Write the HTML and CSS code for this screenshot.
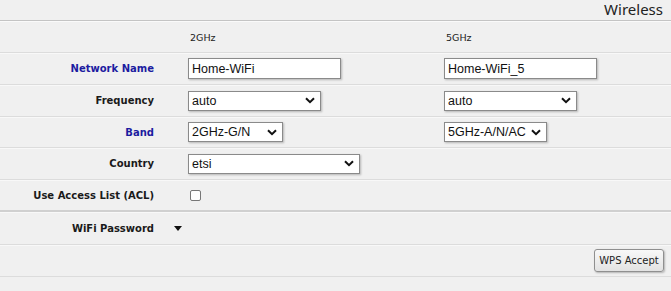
FILE: index.html
```html
<!DOCTYPE html>
<html>
<head>
<meta charset="utf-8">
<link rel="stylesheet" href="styles.css">
</head>
<body>
<div class="page">
  <div class="title">Wireless</div>
  <div class="row">
    <div class="lbl"></div>
    <div class="cell band-head">2GHz</div>
    <div class="cell band-head">5GHz</div>
  </div>
  <div class="row">
    <div class="lbl blue">Network Name</div>
    <div class="cell"><input class="txt" type="text" value="Home-WiFi"></div>
    <div class="cell"><input class="txt" type="text" value="Home-WiFi_5"></div>
  </div>
  <div class="row">
    <div class="lbl">Frequency</div>
    <div class="cell"><select class="sel w-freq"><option>auto</option></select></div>
    <div class="cell"><select class="sel w-freq"><option>auto</option></select></div>
  </div>
  <div class="row short">
    <div class="lbl blue">Band</div>
    <div class="cell"><select class="sel w-band2"><option>2GHz-G/N</option></select></div>
    <div class="cell"><select class="sel w-band5"><option>5GHz-A/N/AC</option></select></div>
  </div>
  <div class="row">
    <div class="lbl">Country</div>
    <div class="cell"><select class="sel w-country"><option>etsi</option></select></div>
    <div class="cell"></div>
  </div>
  <div class="row short sep">
    <div class="lbl">Use Access List (ACL)</div>
    <div class="cell"><input class="chk" type="checkbox"></div>
    <div class="cell"></div>
  </div>
  <div class="row tall">
    <div class="lbl toggle">WiFi Password<span class="tri"></span></div>
    <div class="cell"></div>
    <div class="cell"></div>
  </div>
  <div class="row actions">
    <button class="btn" type="button">WPS Accept</button>
  </div>
</div>
</body>
</html>
```

FILE: styles.css
```css
html, body {
  margin: 0;
  padding: 0;
  background: #f0f0f0;
}
.page {
  width: 671px;
  font-family: "DejaVu Sans", Verdana, sans-serif;
  color: #222;
}
.title {
  height: 20px;
  line-height: 19px;
  text-align: right;
  padding-right: 8px;
  font-family: "Noto Sans", "Open Sans", sans-serif;
  font-size: 15px;
  color: #222;
  border-bottom: 1px solid #c4c4c4;
  box-shadow: 0 1px 0 #fafafa;
}
.row {
  display: grid;
  grid-template-columns: 188px 256px 1fr;
  align-items: center;
  height: 31px;
  border-bottom: 1px solid #dcdcdc;
  box-shadow: 0 1px 0 #f8f8f8;
}
.row.short {
  height: 30px;
}
.row.tall {
  height: 32px;
}
.row.sep {
  border-bottom: 2px solid #d0d0d0;
}
.lbl {
  text-align: right;
  padding-right: 34px;
  font-size: 10px;
  font-weight: bold;
  color: #1a1a1a;
}
.lbl.blue {
  color: #1c1ca0;
}
.lbl.toggle {
  display: flex;
  justify-content: flex-end;
  align-items: center;
  padding-right: 6px;
}
.tri {
  width: 0;
  height: 0;
  margin-left: 20px;
  border-left: 4px solid transparent;
  border-right: 4px solid transparent;
  border-top: 5px solid #111;
}
.cell {
  display: flex;
  align-items: center;
}
.band-head {
  font-size: 9.5px;
  padding-left: 2px;
  color: #222;
  padding-top: 2px;
}
.txt {
  box-sizing: border-box;
  width: 153px;
  height: 21px;
  margin: 0;
  padding: 1px 3px 0;
  font-family: "Liberation Sans", Arial, sans-serif;
  font-size: 12.5px;
  color: #111;
  background: #fff;
  border: 1px solid #8a8a8a;
  border-radius: 0;
  box-shadow: 1px 1px 2px rgba(0,0,0,0.25);
  outline: none;
}
.sel {
  box-sizing: border-box;
  height: 20px;
  margin: 0;
  padding: 0 0 0 3px;
  font-family: "Liberation Sans", Arial, sans-serif;
  font-size: 12.5px;
  color: #111;
  border: 1px solid #8a8a8a;
  border-radius: 0;
  box-shadow: 1px 1px 2px rgba(0,0,0,0.25);
  -webkit-appearance: none;
  appearance: none;
  background: #fff url("data:image/svg+xml;utf8,<svg xmlns='http://www.w3.org/2000/svg' width='10' height='7' viewBox='0 0 10 7'><path d='M1 1.2 L5 5.2 L9 1.2' fill='none' stroke='%23111' stroke-width='2'/></svg>") no-repeat right 5px center;
}
.w-freq { width: 133px; }
.w-band2 { width: 95px; }
.w-band5 { width: 103px; }
.w-country { width: 172px; }
.chk {
  -webkit-appearance: none;
  appearance: none;
  width: 11px;
  height: 11px;
  margin: 0 0 0 2px;
  background: #fff;
  border: 1px solid #777;
  border-radius: 2px;
}
.row.actions {
  display: flex;
  justify-content: flex-end;
  padding-right: 7px;
  height: 31px;
}
.btn {
  box-sizing: border-box;
  width: 70px;
  height: 23px;
  margin: 0;
  padding: 0;
  font-family: "DejaVu Sans", Tahoma, sans-serif;
  font-size: 10px;
  color: #222;
  background: linear-gradient(#f8f8f8, #e2e2e2);
  border: 1px solid #8f8f8f;
  border-radius: 3px;
  box-shadow: 1px 1px 2px rgba(0,0,0,0.25);
}
```
